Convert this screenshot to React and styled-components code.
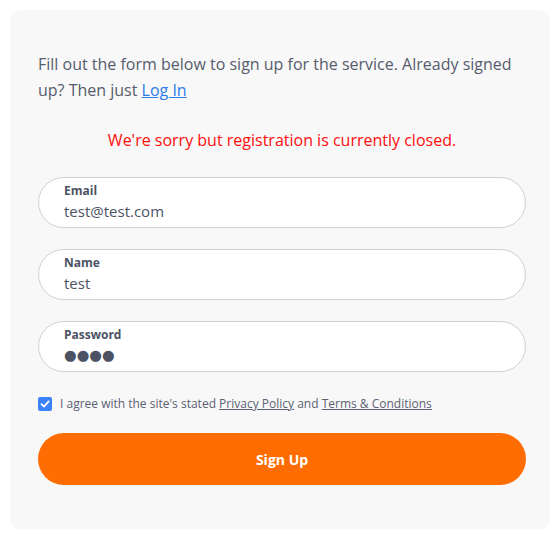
import React from "react";
import styled, { createGlobalStyle } from "styled-components";

const Global = createGlobalStyle`
  html, body { margin: 0; padding: 0; background: #ffffff; }
  body { font-family: "Open Sans", "Noto Sans", sans-serif; }
  * { box-sizing: border-box; }
`;

const Page = styled.div`
  padding: 10px 9px 20px 10px;
`;

const Card = styled.div`
  width: 540px;
  background: #f8f8f8;
  border-radius: 10px;
  padding: 41px 24px 44px 28px;
  display: flex;
  flex-direction: column;
`;

const Intro = styled.p`
  margin: 0;
  font-size: 16px;
  line-height: 26px;
  color: #565c6d;
`;

const Link = styled.a`
  color: #2b7de9;
  text-decoration: underline;
  cursor: pointer;
`;

const ErrorText = styled.p`
  margin: 24px 0 0;
  text-align: center;
  font-size: 16px;
  line-height: 26px;
  color: #ff0d0d;
`;

const Fields = styled.div`
  margin-top: 24px;
  display: flex;
  flex-direction: column;
  gap: 21px;
`;

const Field = styled.label`
  display: flex;
  flex-direction: column;
  height: 51px;
  background: #ffffff;
  border: 1px solid #cfd0d5;
  border-radius: 26px;
  padding: 4px 25px 0;
`;

const FieldLabel = styled.span`
  font-size: 12px;
  font-weight: 700;
  line-height: 18px;
  color: #4c5264;
`;

const FieldInput = styled.input`
  border: none;
  outline: none;
  background: transparent;
  padding: 0;
  margin: 1px 0 0;
  font-family: "Open Sans", "Noto Sans", sans-serif;
  font-size: 15px;
  line-height: 20px;
  height: 20px;
  color: #4c5264;
`;

const Dots = styled.span`
  margin-top: 1px;
  font-family: "DejaVu Sans", sans-serif;
  font-size: 14.5px;
  line-height: 20px;
  color: #4c5264;
`;

const AgreeRow = styled.label`
  margin-top: 23px;
  display: flex;
  align-items: center;
  gap: 8px;
  font-size: 12px;
  line-height: 18px;
  color: #5b6172;
`;

const HiddenCheck = styled.input`
  position: absolute;
  opacity: 0;
  width: 0;
  height: 0;
`;

const Box = styled.span`
  width: 14px;
  height: 14px;
  border-radius: 2px;
  background: #3b82f6;
  display: flex;
  align-items: center;
  justify-content: center;
  flex: none;
`;

const TermLink = styled.a`
  color: #5b6172;
  text-decoration: underline;
  cursor: pointer;
`;

const Button = styled.button`
  margin-top: 20px;
  height: 52px;
  width: 100%;
  border: none;
  border-radius: 26px;
  background: #ff6d02;
  color: #ffffff;
  font-family: "Open Sans", "Noto Sans", sans-serif;
  font-size: 14px;
  font-weight: 700;
  cursor: pointer;
`;

export default function App() {
  return (
    <>
      <Global />
      <Page>
        <Card>
          <Intro>
            Fill out the form below to sign up for the service. Already signed
            up? Then just <Link>Log In</Link>
          </Intro>
          <ErrorText>We're sorry but registration is currently closed.</ErrorText>
          <Fields>
            <Field>
              <FieldLabel>Email</FieldLabel>
              <FieldInput type="text" defaultValue="test@test.com" />
            </Field>
            <Field>
              <FieldLabel>Name</FieldLabel>
              <FieldInput type="text" defaultValue="test" />
            </Field>
            <Field>
              <FieldLabel>Password</FieldLabel>
              <Dots aria-label="password">●●●●</Dots>
            </Field>
          </Fields>
          <AgreeRow>
            <HiddenCheck type="checkbox" defaultChecked />
            <Box>
              <svg width="10" height="10" viewBox="0 0 10 10" fill="none">
                <path d="M1.5 5.2 L4 7.6 L8.6 2.4" stroke="#fff" strokeWidth="1.8" strokeLinecap="round" strokeLinejoin="round" />
              </svg>
            </Box>
            <span>
              I agree with the site's stated <TermLink>Privacy Policy</TermLink> and{" "}
              <TermLink>Terms &amp; Conditions</TermLink>
            </span>
          </AgreeRow>
          <Button>Sign Up</Button>
        </Card>
      </Page>
    </>
  );
}
